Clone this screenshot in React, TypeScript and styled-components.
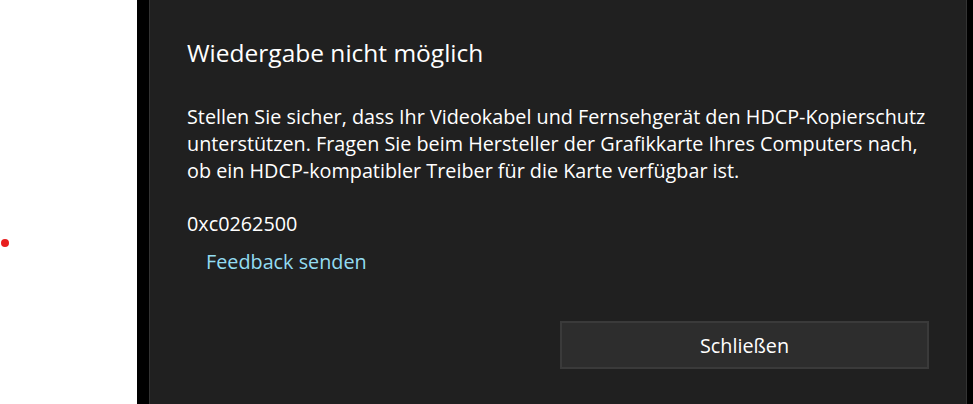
import styled, { createGlobalStyle } from 'styled-components';

const GlobalStyle = createGlobalStyle`
  html, body {
    margin: 0;
    padding: 0;
    background: #000;
  }
  body {
    font-family: 'Open Sans', 'Noto Sans', 'Liberation Sans', sans-serif;
    overflow: hidden;
  }
`;

const App = () => {
  return (
    <>
      <GlobalStyle />
      <Screen>
        <LeftPane>
          <Dot />
        </LeftPane>
        <Gutter />
        <Dialog>
          <Title>Wiedergabe nicht möglich</Title>
          <Message>
            Stellen Sie sicher, dass Ihr Videokabel und Fernsehgerät den HDCP-Kopierschutz
            unterstützen. Fragen Sie beim Hersteller der Grafikkarte Ihres Computers nach,
            ob ein HDCP-kompatibler Treiber für die Karte verfügbar ist.
          </Message>
          <ErrorCode>0xc0262500</ErrorCode>
          <FeedbackLink href="#">Feedback senden</FeedbackLink>
          <Actions>
            <CloseButton type="button">Schließen</CloseButton>
          </Actions>
        </Dialog>
      </Screen>
    </>
  );
};

export default App;

const Screen = styled.div`
  display: flex;
  width: 973px;
  height: 404px;
  background: #000;
`;

const LeftPane = styled.div`
  position: relative;
  width: 137px;
  flex-shrink: 0;
  background: #fff;
`;

const Dot = styled.span`
  position: absolute;
  left: 1px;
  top: 239px;
  width: 8px;
  height: 8px;
  border-radius: 50%;
  background: #e81e1e;
`;

const Gutter = styled.div`
  width: 12px;
  flex-shrink: 0;
`;

const Dialog = styled.section`
  box-sizing: border-box;
  width: 818px;
  height: 420px;
  flex-shrink: 0;
  display: flex;
  flex-direction: column;
  align-items: flex-start;
  padding: 37px 37px 0 37px;
  background: #202020;
  border: 1px solid #333;
  border-top: none;
  color: #fff;
`;

const Title = styled.h1`
  margin: 0;
  font-size: 24.5px;
  font-weight: 400;
  line-height: 32px;
`;

const Message = styled.p`
  width: 754px;
  margin: 34px 0 0;
  font-size: 19.8px;
  line-height: 27px;
`;

const ErrorCode = styled.div`
  margin-top: 26px;
  font-size: 19.8px;
  line-height: 27px;
`;

const FeedbackLink = styled.a`
  margin: 11px 0 0 19px;
  font-size: 19.8px;
  line-height: 27px;
  color: #93dcf2;
  text-decoration: none;
`;

const Actions = styled.div`
  align-self: stretch;
  display: flex;
  justify-content: flex-end;
  margin-top: 46px;
`;

const CloseButton = styled.button`
  box-sizing: border-box;
  width: 369px;
  height: 48px;
  padding: 0;
  background: #2d2d2d;
  border: 2px solid #3a3a3a;
  color: #fff;
  font-family: inherit;
  font-size: 19.8px;
`;
